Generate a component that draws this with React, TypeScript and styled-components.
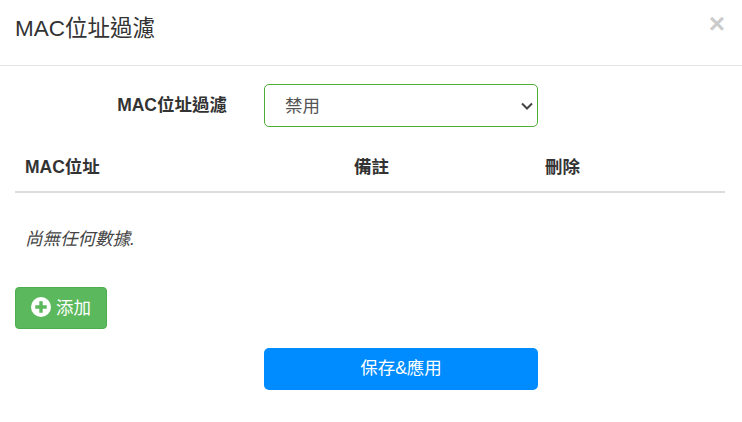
import React from "react";
import styled, { createGlobalStyle } from "styled-components";

const Global = createGlobalStyle`
  html, body { margin: 0; padding: 0; background: #fff; }
  body { font-family: "Liberation Sans", "Noto Sans CJK TC", sans-serif; color: #333; }
  * { box-sizing: border-box; }
`;

const Modal = styled.div`
  width: 742px;
  height: 422px;
  background: #fff;
  overflow: hidden;
`;

const Header = styled.header`
  height: 66px;
  padding: 15px 15px 0;
  border-bottom: 1px solid #e5e5e5;
  display: flex;
  justify-content: space-between;
  align-items: flex-start;
`;

const Title = styled.h4`
  margin: 0;
  font-size: 22.5px;
  line-height: 28px;
  font-weight: 400;
  color: #333;
`;

const Close = styled.button`
  border: 0;
  padding: 0;
  margin: -6px 2px 0 0;
  background: none;
  font: 700 28px/30px "Liberation Sans", sans-serif;
  color: #000;
  opacity: 0.2;
`;

const Body = styled.main`
  padding: 18px 15px 0;
`;

const FormRow = styled.div`
  display: grid;
  grid-template-columns: 212px 274px;
  column-gap: 37px;
  align-items: center;
`;

const Label = styled.label`
  font-size: 17.5px;
  line-height: 24px;
  margin-top: -1px;
  font-weight: 700;
  text-align: right;
  color: #333;
`;

const Select = styled.select`
  appearance: none;
  width: 274px;
  height: 43px;
  padding: 0 20px;
  font: 17.5px "Liberation Sans", "Noto Sans CJK TC", sans-serif;
  color: #555;
  background: #fff url("data:image/svg+xml,%3Csvg xmlns='http://www.w3.org/2000/svg' width='14' height='10' viewBox='0 0 14 10'%3E%3Cpath d='M2 2.5l5 5 5-5' fill='none' stroke='%23444' stroke-width='2'/%3E%3C/svg%3E") no-repeat right 3px center;
  border: 1px solid #4cae33;
  border-radius: 5px;
  outline: none;
`;

const Table = styled.div`
  width: 710px;
  margin-top: 19px;
`;

const HeadRow = styled.div`
  display: grid;
  grid-template-columns: 329px 191px 190px;
  height: 47px;
  border-bottom: 2px solid #ddd;
`;

const HeadCell = styled.div`
  padding: 9px 10px;
  font-size: 17.5px;
  line-height: 24px;
  font-weight: 700;
  color: #333;
`;

const Empty = styled.div`
  padding: 34px 10px 0;
  height: 94px;
  font-size: 17.5px;
  line-height: 24px;
  font-style: italic;
  color: #444;
`;

const AddButton = styled.button`
  display: flex;
  align-items: center;
  justify-content: center;
  gap: 5px;
  width: 92px;
  height: 42px;
  padding: 0 0 3px 0;
  font: 17.5px "Liberation Sans", "Noto Sans CJK TC", sans-serif;
  color: #fff;
  background: #5cb85c;
  border: 1px solid #4cae4c;
  border-radius: 4px;
`;

const SaveRow = styled.div`
  margin-top: 19px;
  padding-left: 249px;
`;

const SaveButton = styled.button`
  display: block;
  width: 274px;
  height: 42px;
  padding: 0 0 5px;
  font: 17.5px "Liberation Sans", "Noto Sans CJK TC", sans-serif;
  color: #fff;
  background: #008cff;
  border: 0;
  border-radius: 5px;
`;

const PlusIcon = () => (
  <svg width="20" height="20" viewBox="0 0 20 20" aria-hidden="true">
    <circle cx="10" cy="10" r="10" fill="#fff" />
    <path d="M8.3 4.3h3.4v4h4v3.4h-4v4H8.3v-4h-4V8.3h4z" fill="#5cb85c" />
  </svg>
);

export default function App() {
  return (
    <Modal>
      <Global />
      <Header>
        <Title>MAC位址過濾</Title>
        <Close type="button">×</Close>
      </Header>
      <Body>
        <FormRow>
          <Label>MAC位址過濾</Label>
          <Select defaultValue="off">
            <option value="off">禁用</option>
            <option value="on">啟用</option>
          </Select>
        </FormRow>
        <Table>
          <HeadRow>
            <HeadCell>MAC位址</HeadCell>
            <HeadCell>備註</HeadCell>
            <HeadCell>刪除</HeadCell>
          </HeadRow>
          <Empty>尚無任何數據.</Empty>
        </Table>
        <AddButton type="button">
          <PlusIcon />
          添加
        </AddButton>
        <SaveRow>
          <SaveButton type="button">保存&amp;應用</SaveButton>
        </SaveRow>
      </Body>
    </Modal>
  );
}
